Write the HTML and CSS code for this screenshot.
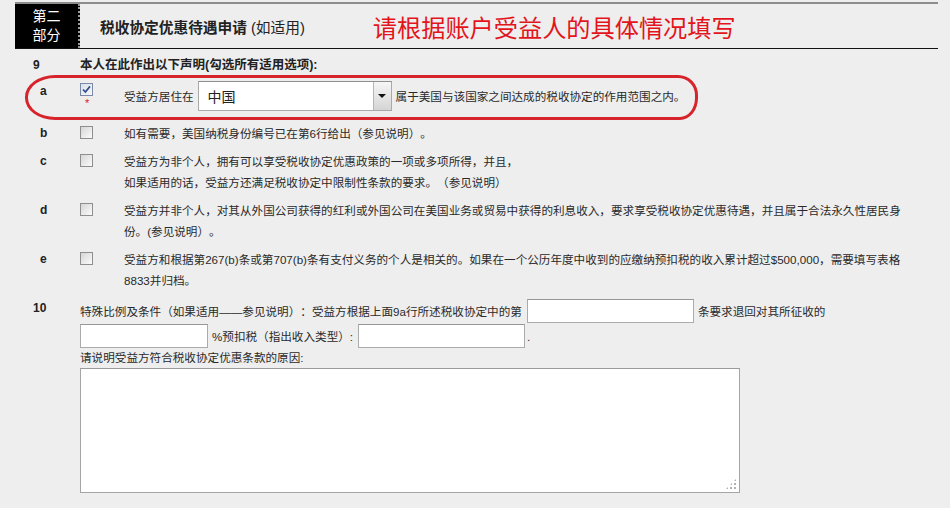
FILE: index.html
```html
<!DOCTYPE html>
<html lang="zh-CN">
<head>
  <meta charset="UTF-8">
  <meta name="viewport" content="width=device-width, initial-scale=1.0">
  <title>税收协定优惠待遇申请</title>
  <link rel="stylesheet" href="styles.css">
</head>
<body>
  <div class="page">

    <div class="part-head">
      <div class="part-no">第二<br>部分</div>
      <div class="part-title">税收协定优惠待遇申请 <span>(如适用)</span></div>
      <div class="part-note">请根据账户受益人的具体情况填写</div>
    </div>

    <div class="decl">
      <div class="num">9</div>
      <div class="decl-text">本人在此作出以下声明(勾选所有适用选项):</div>
    </div>

    <div class="item item-a">
      <span class="mark-ring"></span>
      <div class="letter">a</div>
      <div class="check">
        <span class="box checked">
          <svg width="11" height="11" viewBox="0 0 11 11"><path d="M2 5.5 L4.4 8 L9 2.4" fill="none" stroke="#2d4f8e" stroke-width="1.7"/></svg>
        </span>
        <span class="req">*</span>
      </div>
      <div class="text-inline">受益方居住在</div>
      <div class="select">
        <div class="select-value">中国</div>
        <div class="select-btn"><i></i></div>
      </div>
      <div class="text-inline">属于美国与该国家之间达成的税收协定的作用范围之内。</div>
    </div>

    <div class="item item-b">
      <div class="letter">b</div>
      <div class="check"><span class="box"></span></div>
      <div class="text">如有需要，美国纳税身份编号已在第6行给出（参见说明）。</div>
    </div>

    <div class="item">
      <div class="letter">c</div>
      <div class="check"><span class="box"></span></div>
      <div class="text">受益方为非个人，拥有可以享受税收协定优惠政策的一项或多项所得，并且，<br>如果适用的话，受益方还满足税收协定中限制性条款的要求。（参见说明）</div>
    </div>

    <div class="item">
      <div class="letter">d</div>
      <div class="check"><span class="box"></span></div>
      <div class="text">受益方并非个人，对其从外国公司获得的红利或外国公司在美国业务或贸易中获得的利息收入，要求享受税收协定优惠待遇，并且属于合法永久性居民身<br>份。(参见说明）。</div>
    </div>

    <div class="item">
      <div class="letter">e</div>
      <div class="check"><span class="box"></span></div>
      <div class="text">受益方和根据第267(b)条或第707(b)条有支付义务的个人是相关的。如果在一个公历年度中收到的应缴纳预扣税的收入累计超过$500,000，需要填写表格<br>8833并归档。</div>
    </div>

    <div class="special">
      <div class="num num-10">10</div>
      <div class="special-body">
        <div class="line">
          <span>特殊比例及条件（如果适用——参见说明）：受益方根据上面9a行所述税收协定中的第</span>
          <input class="field field-article" type="text">
          <span>条要求退回对其所征收的</span>
        </div>
        <div class="line line-2">
          <input class="field field-rate" type="text">
          <span>%预扣税（指出收入类型）:</span>
          <input class="field field-income" type="text">
          <span>.</span>
        </div>
        <div class="reason-label">请说明受益方符合税收协定优惠条款的原因:</div>
        <div class="reason">
          <textarea></textarea>
        </div>
      </div>
    </div>

  </div>
</body>
</html>
```

FILE: styles.css
```css
body {
  margin: 0;
  background-color: #eeeeee;
  font-family: "Liberation Sans", "Noto Sans CJK SC", sans-serif;
  font-size: 11.6px;
  color: #2a2a2a;
  text-spacing-trim: space-all;
}
.page {
  padding: 2px 0 0 15px;
  width: 923px;
}
.part-head {
  display: flex;
  align-items: center;
  height: 44px;
  border-top: 2px solid #8c8c8c;
  border-bottom: 1px solid #111;
}
.part-no {
  width: 63px;
  height: 100%;
  background-color: #000;
  color: #fff;
  font-size: 14px;
  line-height: 19px;
  text-align: center;
  display: flex;
  flex-direction: column;
  justify-content: center;
  border-right: 2px dotted #9a9a9a;
}
.part-title {
  margin-left: 20px;
  font-size: 14.7px;
  font-weight: bold;
  color: #222;
}
.part-title span {
  font-weight: normal;
}
.part-note {
  margin-left: 68px;
  font-family: "Noto Sans CJK SC", sans-serif;
  font-size: 24.2px;
  color: #e3141c;
}
.num, .letter {
  width: 65px;
  flex-shrink: 0;
  box-sizing: border-box;
  font-weight: bold;
  font-size: 12px;
  color: #222;
}
.num {
  padding-left: 18px;
}
.letter {
  padding-left: 25px;
  line-height: 21px;
}
.decl {
  display: flex;
  margin-top: 6px;
  line-height: 21px;
}
.decl-text {
  font-weight: bold;
  font-size: 12.5px;
  color: #222;
}
.item {
  display: flex;
  margin-top: 7px;
  line-height: 21px;
}
.item-a {
  position: relative;
  margin-top: 5px;
  height: 30px;
  align-items: center;
}
.item-a .letter {
  align-self: flex-start;
}
.item-b {
  margin-top: 12px;
}
.check {
  width: 44px;
  flex-shrink: 0;
  padding-top: 3px;
}
.item-a .check {
  align-self: flex-start;
  padding-top: 2px;
}
.box {
  display: block;
  width: 11px;
  height: 11px;
  border: 1px solid #8e8e8e;
  background: linear-gradient(135deg, #d6d6d6, #fbfbfb);
}
.box.checked {
  border-color: #7b8aa6;
  background: linear-gradient(135deg, #d9dfea, #f7f8fb);
}
.box svg {
  display: block;
}
.req {
  display: block;
  margin: 2px 0 0 5px;
  font-size: 11px;
  line-height: 11px;
  color: #d11;
}
.text-inline {
  white-space: nowrap;
}
.select {
  display: flex;
  width: 194px;
  height: 30px;
  box-sizing: border-box;
  margin: 0 4px;
  border: 1px solid #a9a9a9;
  border-top-color: #8f8f8f;
  background-color: #fff;
}
.select-value {
  flex: 1;
  padding-left: 9px;
  font-family: "Noto Sans CJK SC", sans-serif;
  font-size: 14px;
  line-height: 28px;
  color: #222;
}
.select-btn {
  width: 17px;
  border-left: 1px solid #b5b5b5;
  background: linear-gradient(#f6f6f6, #d5d5d5);
  display: flex;
  align-items: center;
  justify-content: center;
}
.select-btn i {
  width: 0;
  height: 0;
  border-left: 4px solid transparent;
  border-right: 4px solid transparent;
  border-top: 4px solid #111;
}
.mark-ring {
  position: absolute;
  left: 10px;
  top: -6px;
  width: 673px;
  height: 45px;
  box-sizing: border-box;
  border: 3px solid #d7232b;
  border-radius: 30px 20px 18px 30px / 22px 20px 22px 22px;
  pointer-events: none;
}
.special {
  display: flex;
  margin-top: 8px;
}
.num-10 {
  line-height: 19px;
}
.line {
  display: flex;
  align-items: center;
  height: 24px;
  white-space: nowrap;
}
.line-2 {
  margin-top: 1px;
}
.field {
  height: 24px;
  box-sizing: border-box;
  margin: 0;
  padding: 0 3px;
  border: 1px solid #ababab;
  border-top-color: #969696;
  background-color: #fff;
  font-size: 12px;
}
.field-article {
  width: 167px;
  margin: 0 4px 0 5px;
}
.field-rate {
  width: 128px;
  margin-right: 4px;
}
.field-income {
  width: 167px;
  margin: 0 2px 0 5px;
}
.reason-label {
  line-height: 20px;
}
.reason {
  position: relative;
  width: 660px;
  height: 125px;
}
.reason textarea {
  display: block;
  width: 100%;
  height: 100%;
  box-sizing: border-box;
  margin: 0;
  resize: none;
  border: 1px solid #a5a5a5;
  border-top-color: #999;
  background-color: #fff;
}
.reason::after {
  content: "";
  position: absolute;
  right: 3px;
  bottom: 3px;
  width: 12px;
  height: 12px;
  background: radial-gradient(circle, #b3b3b3 1px, transparent 1.4px) 0 0 / 4px 4px;
  clip-path: polygon(100% 0, 100% 100%, 0 100%);
}
```
